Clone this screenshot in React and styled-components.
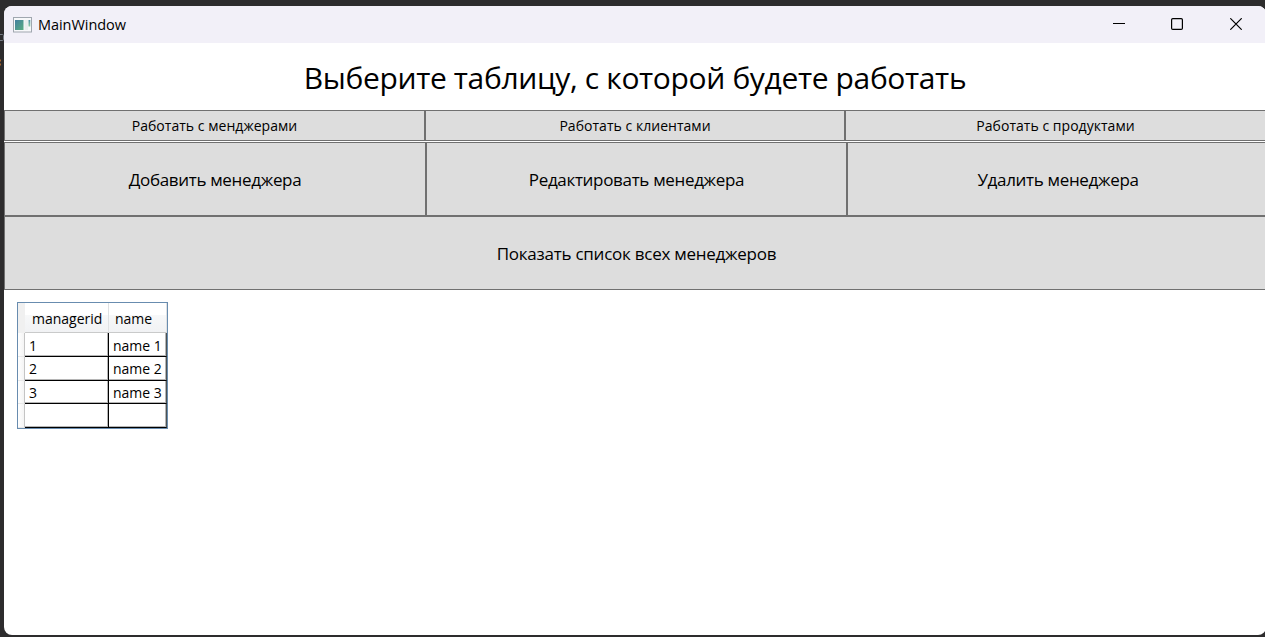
import React from "react";
import styled, { createGlobalStyle } from "styled-components";

const GlobalStyle = createGlobalStyle`
  * { box-sizing: border-box; }
  html, body { margin: 0; height: 100%; overflow: hidden; background: #2d2c2d; }
  body { font-family: "Open Sans", "Noto Sans", sans-serif; color: #000; }
`;

const Desktop = styled.div`
  display: flex;
  width: 1265px;
  height: 637px;
  padding: 6px 0 2px 0;
  overflow: hidden;
  background: #2d2c2d;
`;

/* Sliver of the editor that stays visible beside the window. */
const EditorEdge = styled.svg`
  display: block;
  flex: 0 0 4px;
`;

const Window = styled.main`
  display: flex;
  flex-direction: column;
  flex: 0 0 1262px;
  overflow: hidden;
  background: #fff;
  border-radius: 8px;
`;

const TitleBar = styled.header`
  display: flex;
  align-items: center;
  flex: 0 0 37px;
  padding: 0 1px 0 9px;
  background: #f2f0f8;
`;

const AppIcon = styled.svg`
  display: block;
  margin-right: 6px;
`;

const Label = styled.span`
  display: block;
  white-space: nowrap;
  font-size: ${(p) => p.$size}px;
  line-height: 1.2;
  letter-spacing: ${(p) => p.$spacing || 0}px;
`;

const WindowControls = styled.div`
  display: flex;
  align-self: flex-start;
  margin-left: auto;
`;

const ControlButton = styled.button`
  display: flex;
  align-items: center;
  justify-content: center;
  width: 58.5px;
  height: 36px;
  padding: 0;
  border: 0;
  background: transparent;
`;

const Heading = styled.h1`
  display: flex;
  align-items: center;
  justify-content: center;
  flex: 0 0 67px;
  margin: 0;
  padding-top: 2px;
  font-weight: 400;
`;

const ButtonRow = styled.div`
  display: grid;
  flex: none;
  grid-template-columns: ${(p) => p.$columns};
  height: ${(p) => p.$height}px;
  margin-bottom: ${(p) => p.$gap || 0}px;
`;

const Button = styled.button`
  display: flex;
  align-items: center;
  justify-content: center;
  padding: 2px 0 0;
  border: 1px solid #707070;
  background: #ddd;
  color: #000;
  font-family: inherit;
`;

const Grid = styled.section`
  width: 151px;
  margin: 12px 0 0 13px;
  border: 1px solid #688caf;
  background: #fff;
`;

const GridRow = styled.div`
  display: grid;
  grid-template-columns: 7px 84px 58px;
  height: ${(p) => p.$height}px;
`;

const Corner = styled.div`
  background: #f0f0f0;
`;

const ColumnHeader = styled.div`
  display: flex;
  align-items: center;
  padding: 4px 0 0 ${(p) => p.$inset}px;
  border-right: 1px solid #dfe1e3;
  border-bottom: 1px solid #c9caca;
  background: linear-gradient(#fff 0 40%, #f7f8f9 41%, #f1f2f4);
`;

const RowHeader = styled.div`
  border-right: 1px solid #c4c4c4;
  border-bottom: 1px solid #e8e8e8;
  background: linear-gradient(90deg, #fff, #f4f4f4);
`;

const Cell = styled.div`
  display: flex;
  align-items: center;
  padding: ${(p) => p.$top}px 0 0 4px;
  border-right: 1px solid ${(p) => (p.$last ? "#4b5355" : "#000")};
  border-bottom: 1px solid #000;
  box-shadow: inset -1px -1px #b5b5b5;
`;

const tables = ["Работать с менджерами", "Работать с клиентами", "Работать с продуктами"];
const actions = ["Добавить менеджера", "Редактировать менеджера", "Удалить менеджера"];
const rows = [
  { id: "1", name: "name 1", height: 24, top: 3 },
  { id: "2", name: "name 2", height: 24, top: 1 },
  { id: "3", name: "name 3", height: 23, top: 2 },
  { id: "", name: "", height: 24, top: 1 },
];

export default function App() {
  return (
    <>
      <GlobalStyle />
      <Desktop>
        <EditorEdge width="4" height="629" aria-hidden="true">
          <path d="M0 28.5h2.5q1 0 1 1v4q0 1-1 1H0" fill="none" stroke="#777d86" />
          <path d="M0 54.5h1M0 58.5h1" stroke="#a8662f" strokeWidth="2" />
        </EditorEdge>
        <Window>
          <TitleBar>
            <AppIcon width="19" height="16" viewBox="0 0 19 16">
              <defs>
                <linearGradient id="pane" x1="0" y1="0" x2="1" y2="1">
                  <stop offset="0" stopColor="#437fa0" />
                  <stop offset="1" stopColor="#58ad80" />
                </linearGradient>
                <linearGradient id="strip" x1="0" y1="0" x2="0" y2="1">
                  <stop offset="0" stopColor="#4f8fa5" />
                  <stop offset="1" stopColor="#8fcca5" />
                </linearGradient>
              </defs>
              <rect x=".5" y=".5" width="18" height="14.5" fill="#f7f8fa" stroke="#a0a7af" />
              <rect x="2" y="3" width="8.5" height="10" fill="url(#pane)" />
              <rect x="11.5" y="3" width="3.5" height="10" fill="#e9eeee" />
              <rect x="15.5" y="3" width="1.8" height="6.5" fill="url(#strip)" />
            </AppIcon>
            <Label $size={14.5} $spacing={-0.05}>MainWindow</Label>
            <WindowControls>
              <ControlButton aria-label="Свернуть">
                <svg width="12" height="12"><path d="M0 5.5h12" stroke="#000" /></svg>
              </ControlButton>
              <ControlButton aria-label="Развернуть">
                <svg width="12" height="12"><rect x=".6" y=".6" width="10.8" height="10.8" rx="1.2" fill="none" stroke="#000" strokeWidth="1.2" /></svg>
              </ControlButton>
              <ControlButton aria-label="Закрыть">
                <svg width="12" height="12"><path d="M.3.3l11.4 11.4M11.7.3L.3 11.7" stroke="#000" strokeWidth="1.2" /></svg>
              </ControlButton>
            </WindowControls>
          </TitleBar>
          <Heading><Label $size={30} $spacing={-0.36}>Выберите таблицу, с которой будете работать</Label></Heading>
          <ButtonRow $columns="421px 420px 421px" $height={31} $gap={1}>
            {tables.map((text) => (
              <Button key={text}><Label $size={14} $spacing={0.03}>{text}</Label></Button>
            ))}
          </ButtonRow>
          <ButtonRow $columns="422px 421px 422px" $height={74}>
            {actions.map((text) => (
              <Button key={text}><Label $size={17} $spacing={-0.32}>{text}</Label></Button>
            ))}
          </ButtonRow>
          <ButtonRow $columns="1265px" $height={74}>
            <Button><Label $size={17} $spacing={-0.25}>Показать список всех менеджеров</Label></Button>
          </ButtonRow>
          <Grid>
            <GridRow $height={30}>
              <Corner />
              <ColumnHeader $inset={7}><Label $size={14}>managerid</Label></ColumnHeader>
              <ColumnHeader $inset={6}><Label $size={14}>name</Label></ColumnHeader>
            </GridRow>
            {rows.map((row, i) => (
              <GridRow key={i} $height={row.height}>
                <RowHeader />
                <Cell $top={row.top}><Label $size={14}>{row.id}</Label></Cell>
                <Cell $top={row.top} $last><Label $size={14}>{row.name}</Label></Cell>
              </GridRow>
            ))}
          </Grid>
        </Window>
      </Desktop>
    </>
  );
}
